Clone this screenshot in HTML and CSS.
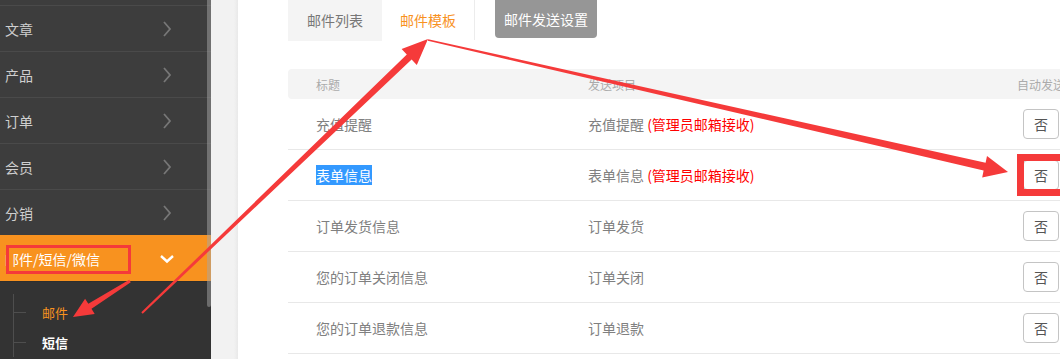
FILE: index.html
```html
<!DOCTYPE html>
<html lang="zh-CN">
<head>
  <meta charset="UTF-8">
  <title>邮件模板</title>
  <link rel="stylesheet" href="styles.css">
</head>
<body>
  <div class="page">
    <aside class="sidebar">
      <ul class="nav">
        <li class="nav-item"><span>文章</span><svg class="chev" viewBox="0 0 14 16"><path d="M4 1 L10 8 L4 15"/></svg></li>
        <li class="nav-item"><span>产品</span><svg class="chev" viewBox="0 0 14 16"><path d="M4 1 L10 8 L4 15"/></svg></li>
        <li class="nav-item"><span>订单</span><svg class="chev" viewBox="0 0 14 16"><path d="M4 1 L10 8 L4 15"/></svg></li>
        <li class="nav-item"><span>会员</span><svg class="chev" viewBox="0 0 14 16"><path d="M4 1 L10 8 L4 15"/></svg></li>
        <li class="nav-item"><span>分销</span><svg class="chev" viewBox="0 0 14 16"><path d="M4 1 L10 8 L4 15"/></svg></li>
        <li class="nav-item active"><span>邮件/短信/微信</span><svg class="chev down" viewBox="0 0 14 16"><path d="M1 5 L7 10.5 L13 5"/></svg></li>
      </ul>
      <ul class="subnav">
        <li class="current">邮件</li>
        <li>短信</li>
      </ul>
      <div class="scrollbar"></div>
    </aside>

    <div class="gutter"></div>

    <main class="main">
      <div class="tabs">
        <div class="tab">邮件列表</div>
        <div class="tab selected">邮件模板</div>
        <button class="btn-settings">邮件发送设置</button>
      </div>

      <div class="table">
        <div class="row head">
          <div class="cell">标题</div>
          <div class="cell">发送项目</div>
          <div class="cell center">自动发送</div>
        </div>
        <div class="row">
          <div class="cell">充值提醒</div>
          <div class="cell">充值提醒 <em>(管理员邮箱接收)</em></div>
          <div class="cell center"><button class="toggle">否</button></div>
        </div>
        <div class="row">
          <div class="cell"><span class="picked">表单信息</span></div>
          <div class="cell">表单信息 <em>(管理员邮箱接收)</em></div>
          <div class="cell center"><button class="toggle">否</button></div>
        </div>
        <div class="row">
          <div class="cell">订单发货信息</div>
          <div class="cell">订单发货</div>
          <div class="cell center"><button class="toggle">否</button></div>
        </div>
        <div class="row">
          <div class="cell">您的订单关闭信息</div>
          <div class="cell">订单关闭</div>
          <div class="cell center"><button class="toggle">否</button></div>
        </div>
        <div class="row">
          <div class="cell">您的订单退款信息</div>
          <div class="cell">订单退款</div>
          <div class="cell center"><button class="toggle">否</button></div>
        </div>
      </div>
    </main>
  </div>

  <!-- screenshot markup: arrows and boxes drawn on top -->
  <svg class="marks" viewBox="0 0 1060 359">
    <rect x="9" y="248" width="4" height="23" fill="#f8921f"/>
    <rect x="7.5" y="246.5" width="122" height="26" fill="none" stroke="#f53a3a" stroke-width="3"/>
    <rect x="1020.5" y="157.5" width="60" height="35" fill="none" stroke="#f53a3a" stroke-width="7"/>
    <polygon points="142.7,313.7 411.6,59.5 416.8,64.9 428,39 401.6,49.1 406.8,54.5 141.3,312.3"/>
    <polygon points="427.8,40.8 983.6,170.6 982.2,177.4 1008,172 987.0,156.0 985.6,162.8 428.2,39.2"/>
    <polygon points="130.8,282.3 91.5,308.8 94.7,313.9 73,317 85.1,298.7 88.3,303.8 129.2,279.7"/>
  </svg>
</body>
</html>
```

FILE: styles.css
```css
html, body {
  margin: 0;
  height: 100%;
}
body {
  font-family: "Noto Sans CJK SC", "Noto Sans", sans-serif;
  font-size: 14px;
  background: #fff;
  overflow: hidden;
  position: relative;
}
ul {
  list-style: none;
  margin: 0;
  padding: 0;
}
.page {
  display: flex;
  height: 359px;
  overflow: hidden;
}

/* sidebar */
.sidebar {
  width: 211px;
  flex-shrink: 0;
  background: #333;
  position: relative;
}
.nav {
  background: #3d3d3d;
  padding-top: 5px;
}
.nav-item {
  height: 45px;
  border-top: 1px solid #4a4a4a;
  display: flex;
  align-items: center;
  justify-content: space-between;
  padding: 0 37px 0 5px;
  color: #cfcfcf;
}
.nav-item.active {
  background: #f8921f;
  border-top-color: #f8921f;
  border-bottom: 1px solid #2e2e2e;
  height: 45px;
  color: #fff;
}
.chev {
  width: 14px;
  height: 16px;
}
.chev path {
  fill: none;
  stroke: #777;
  stroke-width: 1.8;
}
.chev.down path {
  stroke: #fff;
  stroke-width: 2.4;
}
.subnav {
  margin: 12px 0 0 13px;
  border-left: 1px solid #4e4e4e;
  padding-top: 3px;
}
.subnav li {
  height: 30px;
  display: flex;
  align-items: center;
  font-size: 13px;
  color: #fff;
  font-weight: bold;
}
.subnav li::before {
  content: "";
  width: 12px;
  height: 1px;
  background: #4e4e4e;
  margin-right: 16px;
}
.subnav li.current {
  color: #f8921f;
  font-weight: normal;
}
.scrollbar {
  position: absolute;
  top: 0;
  right: 0;
  width: 4px;
  height: 307px;
  border-radius: 0 0 2px 2px;
  background: rgba(165, 165, 165, 0.5);
}

.gutter {
  width: 27px;
  flex-shrink: 0;
  background: linear-gradient(to right, #f2f2f2 85%, #e9e9e9);
}

/* main */
.main {
  flex: 1;
  min-width: 0;
  padding-left: 50px;
}
.tabs {
  display: flex;
  align-items: flex-start;
}
.tab {
  width: 94px;
  height: 41px;
  line-height: 41px;
  text-align: center;
  background: #f4f4f4;
  color: #777;
}
.tab.selected {
  width: 92px;
  height: 40px;
  line-height: 41px;
  background: #fff;
  color: #f8921f;
  border-right: 1px solid #ececec;
}
.btn-settings {
  margin-left: 20px;
  width: 102px;
  height: 38px;
  border: none;
  border-radius: 0 0 4px 4px;
  background: #969696;
  color: #fff;
  font-family: inherit;
  font-size: 14px;
  padding: 0;
}

.table {
  width: 789px;
  margin-top: 28px;
  color: #808080;
}
.row {
  display: grid;
  grid-template-columns: 300px 417px 72px;
  align-items: center;
  height: 50px;
  border-bottom: 1px solid #e8e8e8;
}
.row.head {
  height: 30px;
  background: #f4f4f4;
  border-radius: 4px;
  border-bottom: none;
  font-size: 12px;
  color: #ababab;
}
.cell:first-child {
  padding-left: 28px;
}
.cell.center {
  text-align: center;
}
.cell em {
  font-style: normal;
  color: #ff0000;
}
.picked {
  background: #3399ff;
  color: #fff;
}
.toggle {
  width: 36px;
  height: 30px;
  padding: 0;
  border: 1px solid #c4c4c4;
  border-radius: 4px;
  background: #fff;
  color: #555;
  font-family: inherit;
  font-size: 14px;
  vertical-align: middle;
}

/* annotation layer */
.marks {
  position: absolute;
  top: 0;
  left: 0;
  width: 1060px;
  height: 359px;
  pointer-events: none;
}
.marks polygon {
  fill: #f53a3a;
}
```
